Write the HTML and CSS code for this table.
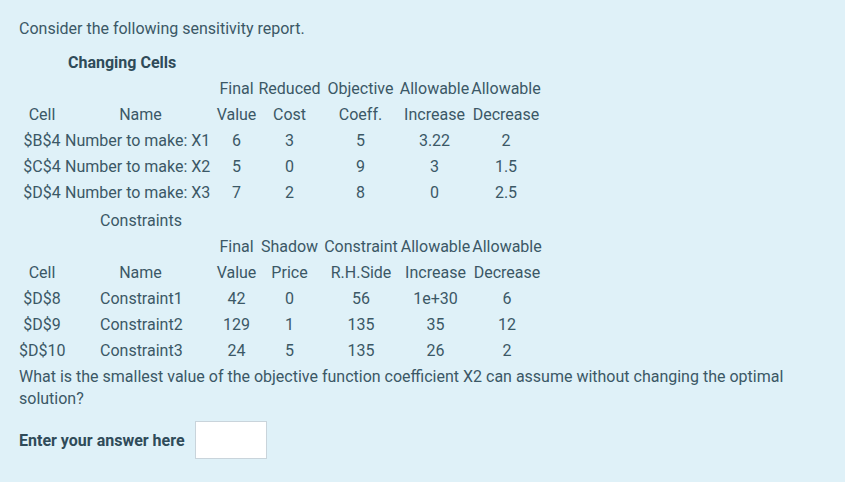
FILE: index.html
```html
<!DOCTYPE html>
<html>
<head>
<meta charset="utf-8">
<link rel="stylesheet" href="styles.css">
</head>
<body>
<div class="page">
  <p class="intro">Consider the following sensitivity report.</p>
  <div class="section-title bold">Changing Cells</div>
  <div class="report">
    <div></div><div></div><div class="c">Final</div><div class="c">Reduced</div><div class="c">Objective</div><div class="c">Allowable</div><div class="c">Allowable</div>
    <div class="c">Cell</div><div class="c">Name</div><div class="c">Value</div><div class="c">Cost</div><div class="c">Coeff.</div><div class="c">Increase</div><div class="c">Decrease</div>
    <div class="c">$B$4</div><div class="name1">Number to make: X1</div><div class="c">6</div><div class="c">3</div><div class="c">5</div><div class="c">3.22</div><div class="c">2</div>
    <div class="c">$C$4</div><div class="name1">Number to make: X2</div><div class="c">5</div><div class="c">0</div><div class="c">9</div><div class="c">3</div><div class="c">1.5</div>
    <div class="c">$D$4</div><div class="name1">Number to make: X3</div><div class="c">7</div><div class="c">2</div><div class="c">8</div><div class="c">0</div><div class="c">2.5</div>
  </div>
  <div class="section-title sub">Constraints</div>
  <div class="report report2">
    <div></div><div></div><div class="c">Final</div><div class="c">Shadow</div><div class="c">Constraint</div><div class="c">Allowable</div><div class="c">Allowable</div>
    <div class="c">Cell</div><div class="c">Name</div><div class="c">Value</div><div class="c">Price</div><div class="c">R.H.Side</div><div class="c">Increase</div><div class="c">Decrease</div>
    <div class="c">$D$8</div><div class="name2">Constraint1</div><div class="c">42</div><div class="c">0</div><div class="c">56</div><div class="c">1e+30</div><div class="c">6</div>
    <div class="c">$D$9</div><div class="name2">Constraint2</div><div class="c">129</div><div class="c">1</div><div class="c">135</div><div class="c">35</div><div class="c">12</div>
    <div class="c">$D$10</div><div class="name2">Constraint3</div><div class="c">24</div><div class="c">5</div><div class="c">135</div><div class="c">26</div><div class="c">2</div>
  </div>
  <p class="question">What is the smallest value of the objective function coefficient X2 can assume without changing the optimal solution?</p>
  <div class="answer">
    <label class="bold" for="ans">Enter your answer here</label>
    <input id="ans" class="answer-box" type="text">
  </div>
</div>
</body>
</html>
```
FILE: styles.css
```css
html, body {
  margin: 0;
  padding: 0;
  background: #dff1f8;
}
body {
  font-family: Roboto, "Open Sans", sans-serif;
  font-size: 16px;
  color: #3b5866;
}
.page {
  padding: 16px 19px 0 19px;
}
.intro {
  margin: 0 0 8px 0;
  line-height: 26px;
}
.bold {
  font-weight: 700;
  color: #2f4b59;
}
.section-title {
  line-height: 26px;
}
.section-title.bold {
  padding-left: 49px;
}
.section-title.sub {
  padding-left: 81px;
  margin-top: 2px;
}
.report {
  display: grid;
  grid-template-columns: 46px 151px 41px 65px 77px 71px 72px;
  grid-auto-rows: 26px;
  line-height: 26px;
  white-space: nowrap;
}
.report2 {
  grid-template-columns: 46px 151px 41px 65px 78px 71px 72px;
}
.c {
  text-align: center;
}
.name1 {
  text-align: left;
}
.name2 {
  text-align: left;
  padding-left: 35px;
}
.question {
  margin: 2px 0 0 0;
  line-height: 22px;
}
.answer {
  display: flex;
  align-items: center;
  gap: 10px;
  margin-top: 11px;
}
.answer-box {
  width: 72px;
  height: 38px;
  box-sizing: border-box;
  border: 1px solid #c9d4db;
  background: #fff;
  margin: 0;
  padding: 0;
}
```
